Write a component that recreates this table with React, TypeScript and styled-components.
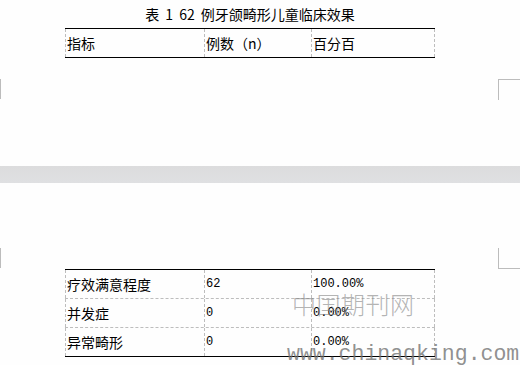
import styled, { createGlobalStyle } from 'styled-components';

const GlobalStyle = createGlobalStyle`
  html, body {
    margin: 0;
    padding: 0;
    background: #ffffff;
  }
  body {
    font-family: 'Noto Sans CJK SC', 'DejaVu Sans', sans-serif;
    color: #000;
  }
`;

const Sheet = styled.div`
  width: 520px;
  height: 365px;
  overflow: hidden;
  display: flex;
  flex-direction: column;
`;

const Page = styled.div<{ $height?: number }>`
  position: relative;
  display: flex;
  flex-direction: column;
  background: #fefefe;
  ${(props) => (props.$height ? `height: ${props.$height}px;` : 'flex: 1;')}
`;

const Caption = styled.div`
  margin-top: 7px;
  width: 370px;
  margin-left: 65px;
  text-align: center;
  font-size: 14px;
  line-height: 15px;
  word-spacing: 3px;
`;

const Table = styled.div<{ $top: number }>`
  margin-top: ${(props) => props.$top}px;
  margin-left: 65px;
  width: 370px;
  border-top: 1px solid #000;
  border-bottom: 1px solid #000;
`;

const Row = styled.div<{ $last?: boolean }>`
  display: grid;
  grid-template-columns: 139px 107px 124px;
  height: 28px;
  border-bottom: ${(props) => (props.$last ? 'none' : '1px dashed #bdbdbd')};
`;

const Cell = styled.div`
  display: flex;
  align-items: center;
  padding-left: 1px;
  border-left: 1px dashed #bdbdbd;
  font-size: 14px;
  white-space: nowrap;

  &:last-child {
    border-right: 1px dashed #bdbdbd;
  }
`;

const Num = styled.span`
  font-family: 'Liberation Mono', monospace;
  font-size: 12px;
`;

const Marks = styled.div<{ $top: number; $side: 'top' | 'bottom' }>`
  margin-top: ${(props) => props.$top}px;
  display: flex;
  justify-content: space-between;
  height: 21px;

  & > span {
    display: block;
    height: 20px;
    border-left: 1px solid #bcbcbc;
  }

  & > span:last-child {
    width: 21px;
    ${(props) =>
      props.$side === 'top' ? 'border-top: 1px solid #bcbcbc;' : 'border-bottom: 1px solid #bcbcbc;'}
  }
`;

const LeftMark = styled.span``;

const RightMark = styled.span``;

const Gap = styled.div`
  height: 17px;
  background: linear-gradient(#dcdcdd, #dfe0e2);
  flex-shrink: 0;
`;

const MarkCn = styled.div`
  position: absolute;
  left: 292px;
  top: 107px;
  font-size: 24px;
  line-height: 28px;
  letter-spacing: 0.5px;
  color: rgba(130, 130, 130, 0.6);
  font-weight: 300;
`;

const MarkUrl = styled.div`
  position: absolute;
  left: 287px;
  top: 159px;
  font-family: 'Liberation Mono', monospace;
  font-size: 21.5px;
  line-height: 24px;
  color: rgba(115, 115, 115, 0.8);
`;

const rows = [
  { name: '疗效满意程度', count: '62', pct: '100.00%' },
  { name: '并发症', count: '0', pct: '0.00%' },
  { name: '异常畸形', count: '0', pct: '0.00%' },
];

export default function App() {
  return (
    <>
      <GlobalStyle />
      <Sheet>
        <Page $height={166}>
          <Caption>表 1 62 例牙颌畸形儿童临床效果</Caption>
          <Table $top={6}>
            <Row $last>
              <Cell>指标</Cell>
              <Cell>例数（n）</Cell>
              <Cell>百分百</Cell>
            </Row>
          </Table>
          <Marks $top={21} $side="top">
            <LeftMark />
            <RightMark />
          </Marks>
        </Page>
        <Gap />
        <Page>
          <Marks $top={65} $side="bottom">
            <LeftMark />
            <RightMark />
          </Marks>
          <Table $top={0}>
            {rows.map((r, i) => (
              <Row key={r.name} $last={i === rows.length - 1}>
                <Cell>{r.name}</Cell>
                <Cell>
                  <Num>{r.count}</Num>
                </Cell>
                <Cell>
                  <Num>{r.pct}</Num>
                </Cell>
              </Row>
            ))}
          </Table>
          <MarkCn>中国期刊网</MarkCn>
          <MarkUrl>www.chinaqking.com</MarkUrl>
        </Page>
      </Sheet>
    </>
  );
}
